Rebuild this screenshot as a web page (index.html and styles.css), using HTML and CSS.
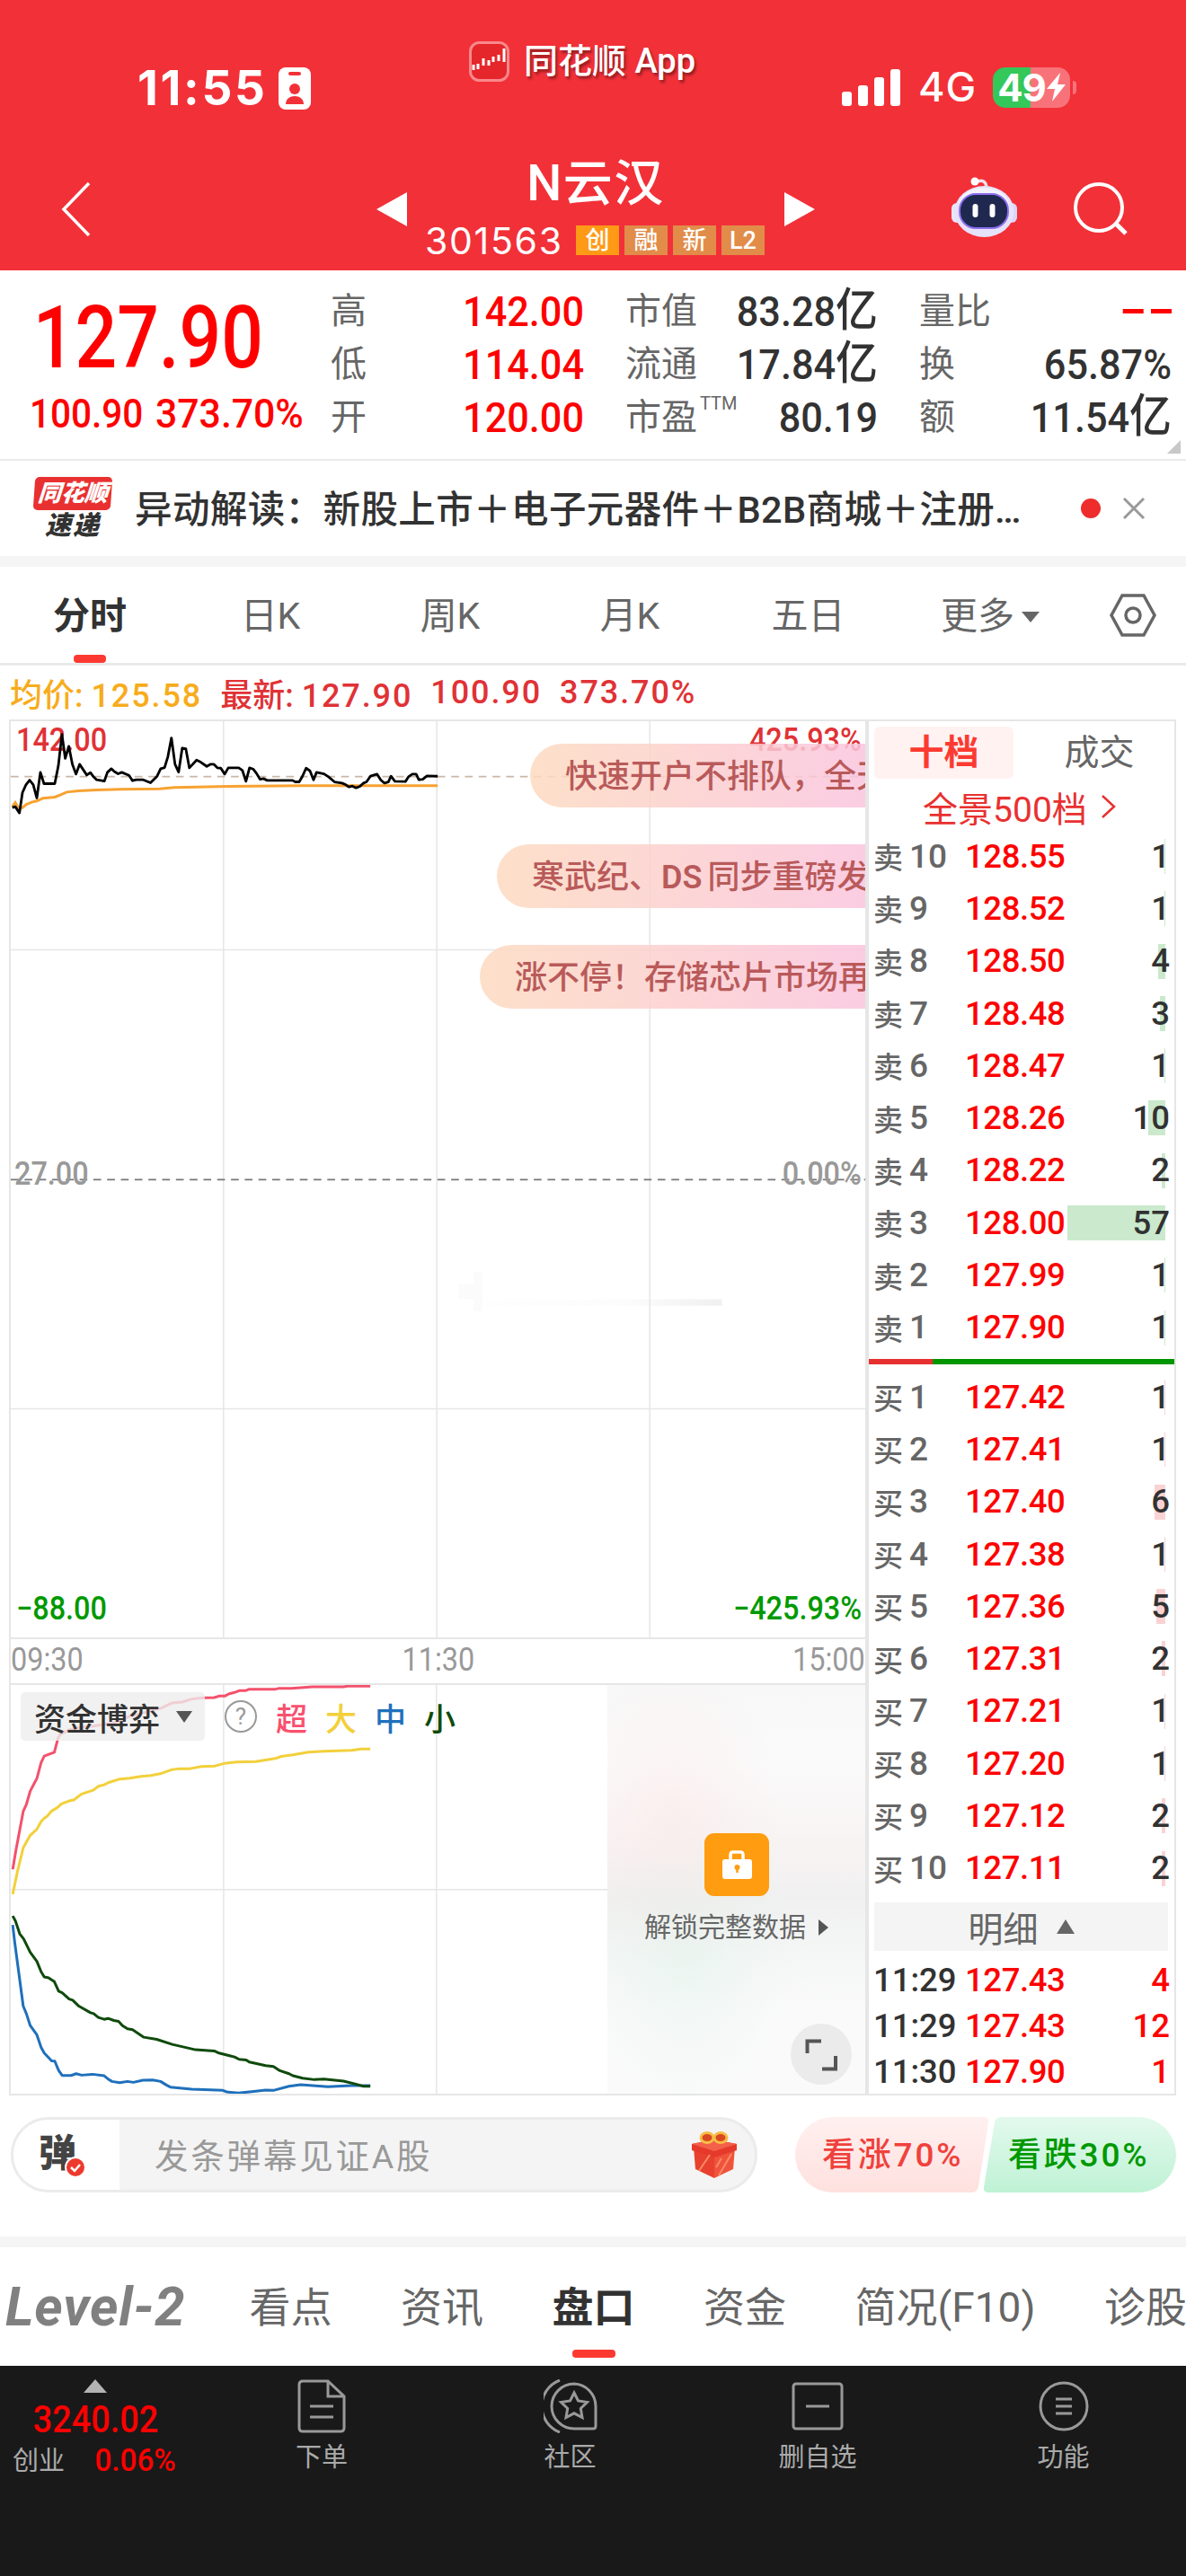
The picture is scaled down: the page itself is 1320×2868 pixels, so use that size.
FILE: index.html
```html
<!DOCTYPE html>
<html lang="zh-CN">
<head>
  <meta charset="UTF-8">
  <meta name="viewport" content="width=device-width, initial-scale=1.0">
  <title>N云汉 301563</title>
  <link rel="stylesheet" href="styles.css">
</head>
<body>

  <!-- Header -->
  <header class="header">
    <div class="status">
      <div class="status-left">
        <span class="clock">11:55</span>
        <svg width="36" height="47" viewBox="0 0 36 47"><rect width="36" height="47" rx="8" fill="#fff"/><rect x="11" y="5" width="14" height="4" rx="2" fill="#f23038"/><circle cx="18" cy="24" r="6" fill="#f23038"/><path d="M8 41c0-12 20-12 20 0z" fill="#f23038"/></svg>
      </div>
      <div class="status-app">
        <svg width="45" height="45" viewBox="0 0 45 45"><rect x="1.5" y="1.5" width="42" height="42" rx="10" fill="#e5262b" stroke="#f9888b" stroke-width="3"/><path d="M5 26v6M10 25v6M16 19v8M22 21v6M27 17v6M33 15v7M39 8v15" stroke="#fff" stroke-width="3"/></svg>
        <span>同花顺 App</span>
      </div>
      <div class="status-right">
        <svg width="66" height="41" viewBox="0 0 66 41" fill="#fff"><rect y="25" width="11" height="16" rx="3"/><rect x="18" y="18" width="11" height="23" rx="3"/><rect x="36" y="9" width="11" height="32" rx="3"/><rect x="54" width="11" height="41" rx="3"/></svg>
        <span class="net">4G</span>
        <span class="battery"><b>49</b><svg width="21" height="32" viewBox="0 0 21 32"><path d="M15 0L0 18h9L6 32 21 13h-9z" fill="#fff"/></svg></span>
      </div>
    </div>
    <div class="title-bar">
      <svg class="back" width="34" height="62" viewBox="0 0 34 62"><path d="M31 2L3 31l28 29" fill="none" stroke="#fff" stroke-width="3.5"/></svg>
      <div class="stock">
        <i class="tri-left"></i>
        <div class="stock-name">
          <h1>N云汉</h1>
          <div class="code"><span>301563</span><em class="first">创</em><em>融</em><em>新</em><em>L2</em></div>
        </div>
        <i class="tri-right"></i>
      </div>
      <svg class="robot" width="74" height="68" viewBox="0 0 74 68">
        <path d="M27 6c7-4 12-1 12 7" fill="none" stroke="#f6dfe8" stroke-width="3.5"/>
        <circle cx="26" cy="5" r="4.5" fill="#fff"/>
        <rect x="0" y="29" width="12" height="22" rx="6" fill="#e9e4fb"/>
        <rect x="61" y="29" width="12" height="22" rx="6" fill="#dcd5f7"/>
        <ellipse cx="36.500" cy="38.500" rx="33" ry="28.500" fill="#e6e2fa"/>
        <ellipse cx="36" cy="32" rx="28" ry="20" fill="#f5f3fe"/>
        <rect x="9" y="19" width="54" height="38" rx="18" fill="#1f2950" stroke="#8f6ff0" stroke-width="2"/>
        <rect x="23.500" y="30" width="6" height="15" rx="3" fill="#fff"/>
        <rect x="42.500" y="30" width="6" height="15" rx="3" fill="#fff"/>
      </svg>
      <svg class="search" width="60" height="60" viewBox="0 0 60 60" fill="none" stroke="#fff" stroke-width="4"><circle cx="28" cy="28" r="26"/><path d="M47 46l11 11" stroke-width="5"/></svg>
    </div>
  </header>

  <!-- Quote -->
  <section class="quote">
    <div class="price">
      <div class="last">127.90</div>
      <div class="change"><span>100.90</span><span>373.70%</span></div>
    </div>
    <dl class="col">
      <dt>高</dt><dd class="red">142.00</dd>
      <dt>低</dt><dd class="red">114.04</dd>
      <dt>开</dt><dd class="red">120.00</dd>
    </dl>
    <dl class="col">
      <dt>市值</dt><dd>83.28<small>亿</small></dd>
      <dt>流通</dt><dd>17.84<small>亿</small></dd>
      <dt>市盈<sup>TTM</sup></dt><dd>80.19</dd>
    </dl>
    <dl class="col">
      <dt>量比</dt><dd class="red dash"><i></i><i></i></dd>
      <dt>换</dt><dd>65.87%</dd>
      <dt>额</dt><dd>11.54<small>亿</small></dd>
    </dl>
    <i class="corner"></i>
  </section>

  <!-- News -->
  <section class="news">
    <div class="news-logo"><span class="logo-top">同花顺</span><span class="logo-bottom">速递</span></div>
    <p>异动解读：新股上市＋电子元器件＋B2B商城＋注册…</p>
    <i class="dot"></i>
    <svg width="26" height="26" viewBox="0 0 26 26"><path d="M2 2l22 22M24 2L2 24" stroke="#999" stroke-width="3"/></svg>
  </section>

  <!-- Period tabs -->
  <nav class="periods">
    <a class="active">分时</a><a>日K</a><a>周K</a><a>月K</a><a>五日</a><a>更多<i></i></a>
    <svg width="54" height="48" viewBox="0 0 54 48" fill="none" stroke="#666" stroke-width="3.500"><path d="M15 2h24l12 22-12 22H15L3 24z"/><circle cx="27" cy="24" r="8"/></svg>
  </nav>

  <div class="legend">
    <span class="avg">均价: <b>125.58</b></span>
    <span>最新: <b>127.90</b></span><b>100.90</b><b>373.70%</b>
  </div>

  <main class="board">
    <div class="charts">
      <!-- Minute chart -->
      <div class="minute">
        <svg class="plot" viewBox="33 6 2856 3066" preserveAspectRatio="none" fill="none">
          <defs>
            <linearGradient id="haze"><stop offset="0" stop-color="#fefefe"/><stop offset="0.6" stop-color="#fcfcfc"/><stop offset="1" stop-color="#f0f0f0"/></linearGradient>
          </defs>
          <path d="M1620 1940h790v22h-790z" fill="url(#haze)"/>
          <path d="M1530 1890h50v-40h30v130h-30v-40h-50z" fill="#fbfbfb"/>
          <g stroke="#e6e6e6" stroke-width="4.500">
            <path d="M744 6v3066M1457 6v3066M2169 6v3066M33 771h2856M33 2307h2856"/>
          </g>
          <path d="M33 1540h2856" stroke="#777" stroke-width="5" stroke-dasharray="26 20"/>
          <path d="M33 191h2856" stroke="#c9b8a4" stroke-width="5" stroke-dasharray="26 20"/>
          <polyline stroke="#f7a231" stroke-width="9" points="38,292 48,278 58,295 72,295 85,284 105,276 120,273 140,264 180,260 195,254 220,243 260,239 320,236 400,234 530,232 580,228 760,224 1000,222 1460,222"/>
        </svg>
        <svg class="plot over" viewBox="33 6 2856 3066" preserveAspectRatio="none" fill="none">
          <polyline stroke="#000" stroke-width="8.500" stroke-linejoin="round" points="38,295 48,292 62,313 72,245 84,218 96,203 108,218 120,263 132,177 144,215 180,215 192,155 204,50 215,130 227,90 239,150 251,183 263,150 275,168 287,186 299,178 308,190 320,202 346,206 356,177 369,165 380,175 392,182 404,177 428,187 440,205 452,202 476,202 500,212 522,190 534,165 547,161 558,125 570,62 582,150 594,176 606,96 618,98 630,162 654,136 668,143 688,157 700,150 712,150 724,162 735,163 748,183 760,162 795,162 807,170 819,207 831,162 843,166 854,180 866,200 878,198 890,204 975,204 984,209 997,209 1008,190 1020,163 1033,172 1045,202 1055,177 1080,182 1095,192 1115,209 1140,213 1152,218 1163,226 1175,223 1187,229 1200,224 1212,213 1222,209 1235,190 1257,183 1270,203 1282,213 1295,209 1304,190 1317,207 1352,208 1362,192 1375,183 1388,183 1397,202 1410,200 1424,189 1460,190"/>
        </svg>
        <div class="axis top"><span>142.00</span><span>425.93%</span></div>
        <div class="axis mid"><span>27.00</span><span>0.00%</span></div>
        <div class="axis low"><span>−88.00</span><span>−425.93%</span></div>
        <div class="bullets">
          <p class="b1">快速开户不排队，全天</p>
          <p class="b2">寒武纪、<b>DS</b>同步重磅发</p>
          <p class="b3">涨不停！存储芯片市场再</p>
        </div>
      </div>
      <div class="times"><span>09:30</span><span>11:30</span><span>15:00</span></div>

      <!-- Fund flow chart -->
      <div class="fund">
        <svg class="plot" viewBox="25 45 2196 1368" preserveAspectRatio="none" fill="none">
          <g stroke="#e6e6e6" stroke-width="1.500">
            <path d="M572 45v1368M1119 45v1368M25 730h2196"/>
          </g>
          <g stroke-width="3" stroke-linejoin="round">
            <polyline stroke="#f4516c" points="30,662 38,600 57,468 65,445 75,400 85,375 92,358 103,305 111,283 137,270 146,225 152,210 175,195 200,188 240,182 290,172 330,150 360,140 412,122 440,105 465,102 490,92 520,88 548,87 560,82 575,82 585,75 600,70 612,64 628,64 638,59 705,59 715,56 745,56 770,54 800,51 880,51 890,49 949,49"/>
            <polyline stroke="#f2d03b" points="30,745 42,670 57,590 75,548 92,528 103,502 110,492 118,485 130,467 145,455 155,443 175,433 187,430 207,410 237,397 250,384 265,379 275,372 302,361 330,357 360,351 385,348 412,341 440,328 460,325 485,325 515,318 550,316 575,307 605,303 655,301 705,291 720,284 750,279 790,270 830,267 900,264 925,259 949,259"/>
            <polyline stroke="#1f70bb" points="30,848 35,905 57,1120 65,1145 75,1185 92,1216 103,1258 111,1277 130,1303 138,1304 148,1335 157,1352 180,1352 193,1346 207,1351 235,1348 265,1353 275,1364 285,1372 305,1376 325,1372 340,1375 365,1368 390,1367 410,1372 425,1384 435,1391 490,1398 570,1402 580,1407 610,1411 655,1405 680,1401 700,1402 740,1388 770,1383 840,1390 900,1386 949,1386"/>
            <polyline stroke="#0f4a0c" points="30,818 37,835 48,878 58,895 75,940 92,970 103,1005 111,1022 122,1025 137,1038 148,1070 157,1075 175,1096 184,1100 200,1120 230,1142 238,1145 250,1158 265,1164 275,1161 290,1168 302,1171 312,1185 325,1196 338,1199 367,1224 400,1231 440,1248 500,1266 548,1270 560,1277 600,1290 612,1298 630,1300 638,1307 680,1319 700,1322 715,1335 740,1346 750,1353 775,1361 805,1366 830,1364 880,1371 912,1381 930,1388 949,1388"/>
          </g>
        </svg>
        <div class="fund-head">
          <span class="select">资金博弈<i></i></span>
          <span class="help">?</span>
          <span class="c1">超</span><span class="c2">大</span><span class="c3">中</span><span class="c4">小</span>
        </div>
        <div class="lock">
          <svg width="72" height="70" viewBox="0 0 72 70"><rect width="72" height="70" rx="11" fill="#ff9c10"/><path d="M29 31v-7q0-3 3-3h8q3 0 3 3v7" fill="none" stroke="#fff" stroke-width="3.500"/><rect x="20" y="29" width="33" height="22" rx="3" fill="#fff"/><circle cx="36.500" cy="38" r="3" fill="#ff9c10"/><path d="M36.500 38v6" stroke="#ff9c10" stroke-width="2.500"/></svg>
          <p>解锁完整数据<i></i></p>
          <svg class="expand" width="68" height="68" viewBox="0 0 68 68"><circle cx="34" cy="34" r="34" fill="#ebebeb"/><path d="M18.500 33V19.500H34M50 36v14.500H35" fill="none" stroke="#555" stroke-width="4"/></svg>
        </div>
      </div>
    </div>

    <!-- Order book -->
    <aside class="book">
      <div class="book-tabs"><b>十档</b><span>成交</span></div>
      <div class="full-depth">全景500档<svg width="18" height="28" viewBox="0 0 18 28"><path d="M2 2l13 12L2 26" fill="none" stroke="#e93030" stroke-width="2.500"/></svg></div>
      <ul class="ask">
        <li><span>卖<b>10</b></span><em>128.55</em><strong>1</strong><i style="width:1px"></i></li>
        <li><span>卖<b>9</b></span><em>128.52</em><strong>1</strong><i style="width:1px"></i></li>
        <li><span>卖<b>8</b></span><em>128.50</em><strong>4</strong><i style="width:8px"></i></li>
        <li><span>卖<b>7</b></span><em>128.48</em><strong>3</strong><i style="width:6px"></i></li>
        <li><span>卖<b>6</b></span><em>128.47</em><strong>1</strong><i style="width:1px"></i></li>
        <li><span>卖<b>5</b></span><em>128.26</em><strong>10</strong><i style="width:19px"></i></li>
        <li><span>卖<b>4</b></span><em>128.22</em><strong>2</strong><i style="width:4px"></i></li>
        <li><span>卖<b>3</b></span><em>128.00</em><strong>57</strong><i style="width:109px"></i></li>
        <li><span>卖<b>2</b></span><em>127.99</em><strong>1</strong><i style="width:1px"></i></li>
        <li><span>卖<b>1</b></span><em>127.90</em><strong>1</strong><i style="width:1px"></i></li>
      </ul>
      <div class="ratio"><i style="width:21%"></i></div>
      <ul class="bid">
        <li><span>买<b>1</b></span><em>127.42</em><strong>1</strong><i style="width:1px"></i></li>
        <li><span>买<b>2</b></span><em>127.41</em><strong>1</strong><i style="width:1px"></i></li>
        <li><span>买<b>3</b></span><em>127.40</em><strong>6</strong><i style="width:12px"></i></li>
        <li><span>买<b>4</b></span><em>127.38</em><strong>1</strong><i style="width:1px"></i></li>
        <li><span>买<b>5</b></span><em>127.36</em><strong>5</strong><i style="width:10px"></i></li>
        <li><span>买<b>6</b></span><em>127.31</em><strong>2</strong><i style="width:4px"></i></li>
        <li><span>买<b>7</b></span><em>127.21</em><strong>1</strong><i style="width:1px"></i></li>
        <li><span>买<b>8</b></span><em>127.20</em><strong>1</strong><i style="width:1px"></i></li>
        <li><span>买<b>9</b></span><em>127.12</em><strong>2</strong><i style="width:4px"></i></li>
        <li><span>买<b>10</b></span><em>127.11</em><strong>2</strong><i style="width:4px"></i></li>
      </ul>
      <div class="detail">明细<i></i></div>
      <ul class="ticks">
        <li><span>11:29</span><em>127.43</em><strong>4</strong></li>
        <li><span>11:29</span><em>127.43</em><strong>12</strong></li>
        <li><span>11:30</span><em>127.90</em><strong>1</strong></li>
      </ul>
    </aside>
  </main>

  <!-- Comment bar -->
  <section class="comment">
    <div class="input">
      <div class="danmu">弹<svg width="24" height="24" viewBox="0 0 24 24"><circle cx="12" cy="12" r="11" fill="#ee3a2e" stroke="#fff" stroke-width="2"/><path d="M7 12l4 4 6-7" fill="none" stroke="#fff" stroke-width="2.500"/></svg></div>
      <span>发条弹幕见证A股</span>
      <svg class="gift" width="50" height="52" viewBox="0 0 50 52">
        <path d="M2 18l23 7v27L4 42z" fill="#e8412f"/><path d="M48 18l-23 7v27l21-10z" fill="#f0533c"/>
        <path d="M0 14l24-5 26 5v7l-25 8L0 21z" fill="#e53a2b"/><path d="M0 14l24-5 26 5-25 8z" fill="#f4604a"/>
        <path d="M8 44l12-18M30 49l14-24M33 30l-6 10" stroke="#f98a66" stroke-width="2"/>
        <ellipse cx="17" cy="7" rx="7" ry="5.500" fill="#d9481f" stroke="#f7bd45" stroke-width="3"/><ellipse cx="32" cy="7" rx="7" ry="5.500" fill="#d9481f" stroke="#f7bd45" stroke-width="3"/>
      </svg>
    </div>
    <div class="vote">
      <svg width="424" height="84" viewBox="0 0 424 84">
        <defs>
          <linearGradient id="up" x1="0" y1="0" x2="0" y2="1"><stop offset="0" stop-color="#fff0ef"/><stop offset="1" stop-color="#fee1df"/></linearGradient>
          <linearGradient id="down" x1="0" y1="0" x2="0" y2="1"><stop offset="0" stop-color="#e3f9ed"/><stop offset="1" stop-color="#bff2d5"/></linearGradient>
        </defs>
        <path d="M42 0h168q6 0 5 6l-11 71q-1 7-8 7H42a42 42 0 0 1 0-84z" fill="url(#up)"/>
        <path d="M229 0h153a42 42 0 0 1 0 84H215q-6 0-5-6l12-72q1-6 7-6z" fill="url(#down)"/>
      </svg>
      <span class="up">看涨70%</span><span class="down">看跌30%</span>
    </div>
  </section>

  <!-- Section tabs -->
  <nav class="sections">
    <a class="level">Level-2</a><a>看点</a><a>资讯</a><a class="active">盘口</a><a>资金</a><a>简况(F10)</a><a>诊股</a>
  </nav>

  <!-- Bottom bar -->
  <footer class="footer">
    <div class="index"><i></i><b>3240.02</b><p><span>创业</span><em>0.06%</em></p></div>
    <div class="tool">
      <svg width="60" height="60" viewBox="0 0 60 60"><path d="M37 2H9q-4 0-4 4v48q0 4 4 4h42q4 0 4-4V19zM37 2v17h18M17 30h26M17 42h26"/></svg>
      <span>下单</span>
    </div>
    <div class="tool">
      <svg width="60" height="60" viewBox="0 0 60 60"><path d="M18 1a31 31 0 0 0 0 58"/><path d="M34 5a25 25 0 1 0 0 50h21q3 0 3-3V30A25 25 0 0 0 34 5z"/><path d="M34 15l4.500 9 10 1.500-7.200 7 1.700 10-9-4.700-9 4.700 1.700-10-7.200-7 10-1.500z"/></svg>
      <span>社区</span>
    </div>
    <div class="tool">
      <svg width="60" height="60" viewBox="0 0 60 60"><rect x="3" y="5" width="54" height="50" rx="3"/><path d="M17 30h26"/></svg>
      <span>删自选</span>
    </div>
    <div class="tool">
      <svg width="60" height="60" viewBox="0 0 60 60"><circle cx="30" cy="30" r="26"/><path d="M21 22h18M21 30h18M21 38h18"/></svg>
      <span>功能</span>
    </div>
  </footer>

</body>
</html>
```

FILE: styles.css
```css
* {
  box-sizing: border-box;
  margin: 0;
  padding: 0;
}
body {
  width: 1320px;
  height: 2868px;
  background-color: #fff;
  color: #323232;
  font-family: Roboto, "Noto Sans CJK SC", sans-serif;
  overflow: hidden;
}
i, em {
  font-style: normal;
}
ul {
  list-style: none;
}
svg {
  display: block;
}

/* header */
.header {
  height: 301px;
  background-color: #f23038;
  color: #fff;
}
.status {
  display: grid;
  grid-template-columns: 369px 415px 1fr;
  height: 165px;
  padding-left: 153px;
  align-items: start;
}
.status-left, .status-app, .status-right {
  display: flex;
  align-items: center;
}
.status-left {
  margin-top: 66px;
}
.clock {
  width: 157px;
  font: 700 53px/64px Inter, sans-serif;
  letter-spacing: 2.7px;
}
.status-app {
  gap: 16px;
  margin-top: 46px;
  font-size: 38px;
  font-weight: 500;
  line-height: 45px;
  text-shadow: 2px 3px 3px rgba(0, 0, 0, 0.4);
}
.status-right {
  margin-top: 74px;
}
.net {
  width: 83px;
  margin-left: 19px;
  font: 500 45px/46px Inter, sans-serif;
  letter-spacing: 1px;
}
.battery {
  position: relative;
  display: flex;
  align-items: center;
  justify-content: center;
  gap: 1px;
  width: 86px;
  height: 45px;
  border-radius: 14px;
  background: linear-gradient(90deg, #34c759 49%, #f87379 49%);
}
.battery b {
  font: 700 42px/45px Inter, sans-serif;
  letter-spacing: -1px;
}
.battery::after {
  content: "";
  position: absolute;
  right: -7px;
  top: 15px;
  width: 4px;
  height: 15px;
  border-radius: 0 4px 4px 0;
  background-color: #f87379;
}
.title-bar {
  display: grid;
  grid-template-columns: 351px 640px 136px 1fr;
  height: 136px;
  padding-left: 68px;
  align-items: center;
}
.stock {
  display: flex;
  justify-content: space-between;
  align-items: center;
  width: 488px;
  height: 136px;
}
.stock > i {
  border: 19px solid transparent;
}
.stock .tri-left {
  border-left-width: 0;
  border-right: 34px solid #fff;
}
.stock .tri-right {
  border-right-width: 0;
  border-left: 34px solid #fff;
}
.stock-name {
  width: 380px;
}
.stock-name h1 {
  padding-top: 3px;
  text-align: center;
  font-size: 55px;
  font-weight: 500;
  line-height: 66px;
  letter-spacing: 1.5px;
}
.code {
  display: flex;
  align-items: center;
  gap: 6px;
  height: 62px;
}
.code span {
  width: 162px;
  font: 400 41px/60px Inter, sans-serif;
  letter-spacing: 1.7px;
}
.code em {
  width: 48px;
  height: 33px;
  background-color: #e28c49;
  font-size: 27px;
  font-weight: 500;
  line-height: 34px;
  text-align: center;
}
.code .first {
  background-color: #ff9a16;
}
.robot {
  margin-top: -4px;
}

/* quote */
.quote {
  position: relative;
  display: grid;
  grid-template-columns: 286px 282px 281px 281px;
  column-gap: 46px;
  height: 212px;
  padding: 16px 16px 0 36px;
  border-bottom: 2px solid #eaeaea;
}
.red {
  color: #f00;
}
.price {
  color: #f00;
}
.last {
  height: 116px;
  padding-left: 1px;
  font-size: 96px;
  font-weight: 500;
  line-height: 118px;
  transform: scaleX(0.855);
  transform-origin: left;
}
.change {
  display: flex;
  height: 54px;
  margin-left: -3px;
  font-size: 45px;
  font-weight: 500;
  line-height: 56px;
}
.change span {
  width: 150px;
  transform: scaleX(0.9);
  transform-origin: left;
}
.change span:last-child {
  transform: scaleX(0.95);
}
.col {
  display: grid;
  grid-template-columns: 40px 1fr;
  grid-auto-rows: 59px;
  line-height: 59px;
}
.col dt {
  color: #666;
  font-size: 40px;
  white-space: nowrap;
}
.col sup {
  margin-left: 3px;
  font-size: 20px;
  vertical-align: 22px;
  line-height: 0;
}
.col dd {
  font-size: 47px;
  font-weight: 500;
  text-align: right;
  white-space: nowrap;
  transform: scaleX(0.92);
  transform-origin: right;
}
.col small {
  font-size: 51px;
  line-height: 0;
}
.col .dash {
  display: flex;
  justify-content: flex-end;
  align-items: center;
  gap: 9px;
}
.dash i {
  width: 25px;
  height: 5px;
  background-color: #f00;
}
.corner {
  position: absolute;
  right: 6px;
  bottom: 6px;
  border-left: 15px solid transparent;
  border-bottom: 15px solid #c8c8c8;
}

/* news */
.news {
  display: flex;
  align-items: center;
  height: 106px;
  padding-left: 38px;
}
.news-logo {
  width: 86px;
  margin-right: 26px;
  font-weight: 900;
  font-style: italic;
  text-align: center;
}
.logo-top {
  display: block;
  width: 86px;
  height: 37px;
  border-radius: 5px;
  background-color: #e93030;
  color: #fff;
  font-size: 26px;
  line-height: 36px;
  transform: skewX(-4deg);
}
.logo-bottom {
  display: block;
  height: 34px;
  font-size: 29px;
  line-height: 34px;
  letter-spacing: 2px;
}
.news p {
  width: 1053px;
  padding-bottom: 4px;
  font-size: 41.5px;
  font-weight: 500;
  letter-spacing: 0.4px;
  white-space: nowrap;
}
.dot {
  width: 22px;
  height: 22px;
  margin-right: 24px;
  border-radius: 50%;
  background-color: #ee2c2c;
}

/* period tabs */
.periods {
  display: grid;
  grid-template-columns: 200px 202px 198px 202px 195px 210px 1fr;
  align-items: center;
  height: 122px;
  border-top: 12px solid #f5f5f5;
  border-bottom: 3px solid #eaeaea;
}
.periods a {
  position: relative;
  padding-top: 4px;
  color: #666;
  font-size: 41px;
  line-height: 103px;
  text-align: center;
}
.periods svg {
  margin-left: 27px;
}
.periods .active {
  color: #323232;
  font-weight: 700;
}
.periods .active::after, .sections .active::after {
  content: "";
  position: absolute;
  left: 50%;
  bottom: 0;
  width: 36px;
  height: 9px;
  margin-left: -18px;
  border-radius: 4px;
  background-color: #fc3a32;
}
.periods a i {
  display: inline-block;
  margin-left: 8px;
  border: 10px solid transparent;
  border-top: 12px solid #666;
  border-bottom: 0;
  vertical-align: 7px;
}

.legend {
  display: flex;
  align-items: center;
  gap: 20px;
  height: 60px;
  padding-left: 11px;
  color: #e03236;
  font-size: 36px;
  font-weight: 500;
}
.legend b {
  font-weight: 500;
  letter-spacing: 1.9px;
}
.avg {
  color: #f7ac1c;
}

/* board */
.board {
  display: flex;
  width: 1299px;
  height: 1532px;
  margin-left: 10px;
  border: 2px solid #e6e6e6;
}
.charts {
  flex: none;
  width: 953px;
  border-right: 2px solid #e6e6e6;
}
.minute {
  position: relative;
  height: 1022px;
  border-bottom: 2px solid #e6e6e6;
  overflow: hidden;
}
.plot {
  position: absolute;
  left: 0;
  top: 0;
  width: 100%;
  height: 100%;
}
.fund .plot * {
  vector-effect: non-scaling-stroke;
}
.over {
  z-index: 1;
}
.axis {
  position: absolute;
  left: 6px;
  right: 4px;
  display: flex;
  justify-content: space-between;
  font-size: 36px;
  font-weight: 500;
  line-height: 40px;
}
.axis span {
  transform: scaleX(0.9);
  transform-origin: left;
}
.axis span:last-child {
  transform-origin: right;
}
.top {
  top: 1px;
  color: #e03236;
}
.mid {
  top: 484px;
  left: 4px;
  color: #999;
}
.low {
  bottom: 12px;
  color: #090;
}
.bullets {
  position: absolute;
  right: 0;
  top: 25px;
  width: 429px;
}
.bullets p {
  height: 71px;
  margin-bottom: 41px;
  padding-left: 39px;
  border-radius: 36px 0 0 36px;
  background: linear-gradient(90deg, rgba(253, 218, 192, 0.85), rgba(250, 196, 221, 0.85));
  color: #b95a5a;
  font-size: 36px;
  font-weight: 500;
  line-height: 75px;
  white-space: nowrap;
  overflow: hidden;
}
.bullets .b1 {
  margin-left: 56px;
}
.bullets .b2 {
  margin-left: 19px;
}
.bullets b {
  margin-right: 6px;
  font-weight: 600;
}
.times {
  display: flex;
  justify-content: space-between;
  height: 49px;
  color: #999;
  font-size: 36px;
  line-height: 47px;
}
.times span {
  transform: scaleX(0.9);
  transform-origin: left;
}
.times span:nth-child(2) {
  transform-origin: center;
}
.times span:last-child {
  transform-origin: right;
}
.fund {
  position: relative;
  height: 457px;
  border-top: 2px solid #e6e6e6;
}
.fund-head {
  position: relative;
  display: flex;
  align-items: center;
  height: 70px;
  padding-left: 11px;
  font-size: 35px;
  font-weight: 500;
}
.select {
  display: flex;
  align-items: center;
  width: 205px;
  height: 54px;
  padding-left: 15px;
  border-radius: 5px;
  background-color: rgba(238, 238, 238, 0.8);
  white-space: nowrap;
}
.select i {
  margin-left: 18px;
  border: 9px solid transparent;
  border-top: 13px solid #555;
  border-bottom: 0;
}
.help {
  width: 36px;
  height: 36px;
  margin: 0 21px 0 22px;
  border: 2px solid #999;
  border-radius: 50%;
  color: #999;
  font-size: 26px;
  font-weight: 400;
  line-height: 32px;
  text-align: center;
}
.fund-head span[class^="c"] {
  width: 55px;
}
.c1 {
  color: #f9506e;
}
.c2 {
  color: #f2d03b;
}
.c3 {
  color: #1f70bb;
}
.c4 {
  color: #0f4a0c;
}
.lock {
  position: absolute;
  top: 0;
  right: 0;
  display: flex;
  flex-direction: column;
  align-items: center;
  width: 287px;
  height: 100%;
  padding-top: 165px;
  background:
    radial-gradient(ellipse at 25% 32%, rgba(255, 228, 228, 0.4), transparent 40%),
    radial-gradient(ellipse at 30% 65%, rgba(222, 242, 234, 0.45), transparent 42%),
    linear-gradient(#f8f8f8, #fafafa 20%, #f8f3f3 40%, #f0f0f0 52%, #f4f6f5 65%, #fafafa 80%);
}
.lock p {
  display: flex;
  align-items: center;
  margin-top: 15px;
  color: #666;
  font-size: 30px;
  line-height: 40px;
}
.lock p i {
  margin-left: 14px;
  border: 9px solid transparent;
  border-left: 11px solid #555;
  border-right: 0;
}
.expand {
  position: absolute;
  right: 15px;
  bottom: 10px;
}

/* order book */
.book {
  flex: 1;
  min-width: 0;
  border-left: 2px solid #e6e6e6;
}
.book-tabs {
  display: flex;
  align-items: center;
  height: 69px;
  padding-left: 6px;
  color: #666;
  font-size: 39px;
  line-height: 58px;
  text-align: center;
}
.book-tabs b {
  width: 155px;
  border-radius: 6px;
  background-color: #fff2f1;
  color: #fc3a32;
}
.book-tabs span {
  flex: 1;
  padding-left: 12px;
}
.full-depth {
  display: flex;
  justify-content: center;
  align-items: center;
  gap: 15px;
  height: 52px;
  padding-right: 4px;
  color: #e93030;
  font-size: 39px;
}
.book li {
  position: relative;
  display: grid;
  grid-template-columns: 102px 120px 1fr;
  align-items: center;
  height: 58.3px;
  padding: 0 5px 0 5px;
  font-size: 36.5px;
  font-weight: 500;
}
.book li span {
  display: flex;
  align-items: center;
  gap: 7px;
  color: #666;
  font-size: 33px;
}
.book li b {
  font-size: 37px;
  font-weight: 500;
}
.book li em {
  color: #f00;
  letter-spacing: -0.4px;
}
.book li strong {
  font-weight: 500;
  text-align: right;
}
.book li i {
  position: absolute;
  z-index: -1;
  right: 10px;
  top: 10px;
  height: 39px;
}
.ask i {
  background-color: #cbe9cd;
}
.bid i {
  background-color: #f9d3d3;
}
.ratio {
  height: 6px;
  margin: 6px 0 7px;
  background-color: #009600;
}
.ratio i {
  display: block;
  height: 6px;
  background-color: #e63030;
}
.detail {
  display: flex;
  justify-content: center;
  align-items: center;
  gap: 20px;
  width: 327px;
  height: 54px;
  margin: 9px 0 7px 6px;
  background-color: #f4f4f4;
  color: #666;
  font-size: 39px;
}
.detail i {
  border: 10px solid transparent;
  border-top: 0;
  border-bottom: 16px solid #666;
}
.book .ticks li {
  height: 51px;
}
.book .ticks span {
  color: #323232;
  font-size: 36.5px;
}
.ticks strong {
  color: #f00;
}

/* comment bar */
.comment {
  display: flex;
  justify-content: space-between;
  height: 157px;
  padding: 24px 11px 0 12px;
}
.input {
  display: flex;
  align-items: center;
  width: 831px;
  height: 84px;
  border: 3px solid #ebebeb;
  border-radius: 42px;
  background-color: #f4f4f4;
  color: #999;
  font-size: 37.5px;
  letter-spacing: 2.8px;
  overflow: hidden;
}
.input > span {
  padding-bottom: 3px;
}
.danmu {
  position: relative;
  width: 118px;
  height: 78px;
  margin-right: 39px;
  padding-left: 28px;
  background-color: #fff;
  color: #444;
  font-size: 42px;
  font-weight: 900;
  line-height: 76px;
}
.danmu svg {
  position: absolute;
  left: 57px;
  top: 41px;
}
.gift {
  margin-left: auto;
  margin-right: 20px;
}
.vote {
  position: relative;
  width: 424px;
  height: 84px;
  font-size: 37px;
  font-weight: 500;
}
.vote svg {
  position: absolute;
}
.vote span {
  position: relative;
  display: inline-block;
  line-height: 85px;
  letter-spacing: 2.8px;
}
.up {
  width: 207px;
  padding-left: 30px;
  color: #f0413c;
}
.down {
  padding-left: 30px;
  color: #090;
}

/* section tabs */
.sections {
  display: flex;
  height: 144px;
  padding-left: 6px;
  border-top: 12px solid #f5f5f5;
  white-space: nowrap;
  overflow: hidden;
}
.sections a {
  position: relative;
  margin-right: 76.5px;
  color: #666;
  font-size: 46px;
  line-height: 134px;
}
.sections .level {
  width: 195px;
  color: #808080;
  font-size: 60px;
  font-style: italic;
  font-weight: 700;
  letter-spacing: 0.8px;
}
.sections .active {
  color: #323232;
  font-weight: 700;
}
.sections .active::after {
  bottom: 9px;
  width: 48px;
  margin-left: -24px;
}

/* bottom bar */
.footer {
  display: grid;
  grid-template-columns: 220px 276px 277px 274px 273px;
  height: 234px;
  background-color: #191919;
  color: #aaa;
  font-size: 29px;
}
.index {
  display: flex;
  flex-direction: column;
  align-items: center;
  width: 212px;
  padding-top: 15px;
}
.index i {
  border: 13px solid transparent;
  border-top: 0;
  border-bottom: 15px solid #b3b3b3;
}
.index b {
  margin-top: 5px;
  color: #f00;
  font-size: 42px;
  font-weight: 500;
  line-height: 50px;
  transform: scaleX(0.9);
}
.index p {
  display: flex;
  align-items: center;
  gap: 31px;
  line-height: 42px;
}
.index em {
  color: #f00;
  font-size: 35px;
  font-weight: 500;
  transform: scaleX(0.95);
}
.tool {
  display: flex;
  flex-direction: column;
  align-items: center;
  padding-top: 15px;
}
.tool svg {
  fill: none;
  stroke: #999;
  stroke-width: 3;
}
.tool span {
  margin-top: 7px;
  line-height: 40px;
}
```
